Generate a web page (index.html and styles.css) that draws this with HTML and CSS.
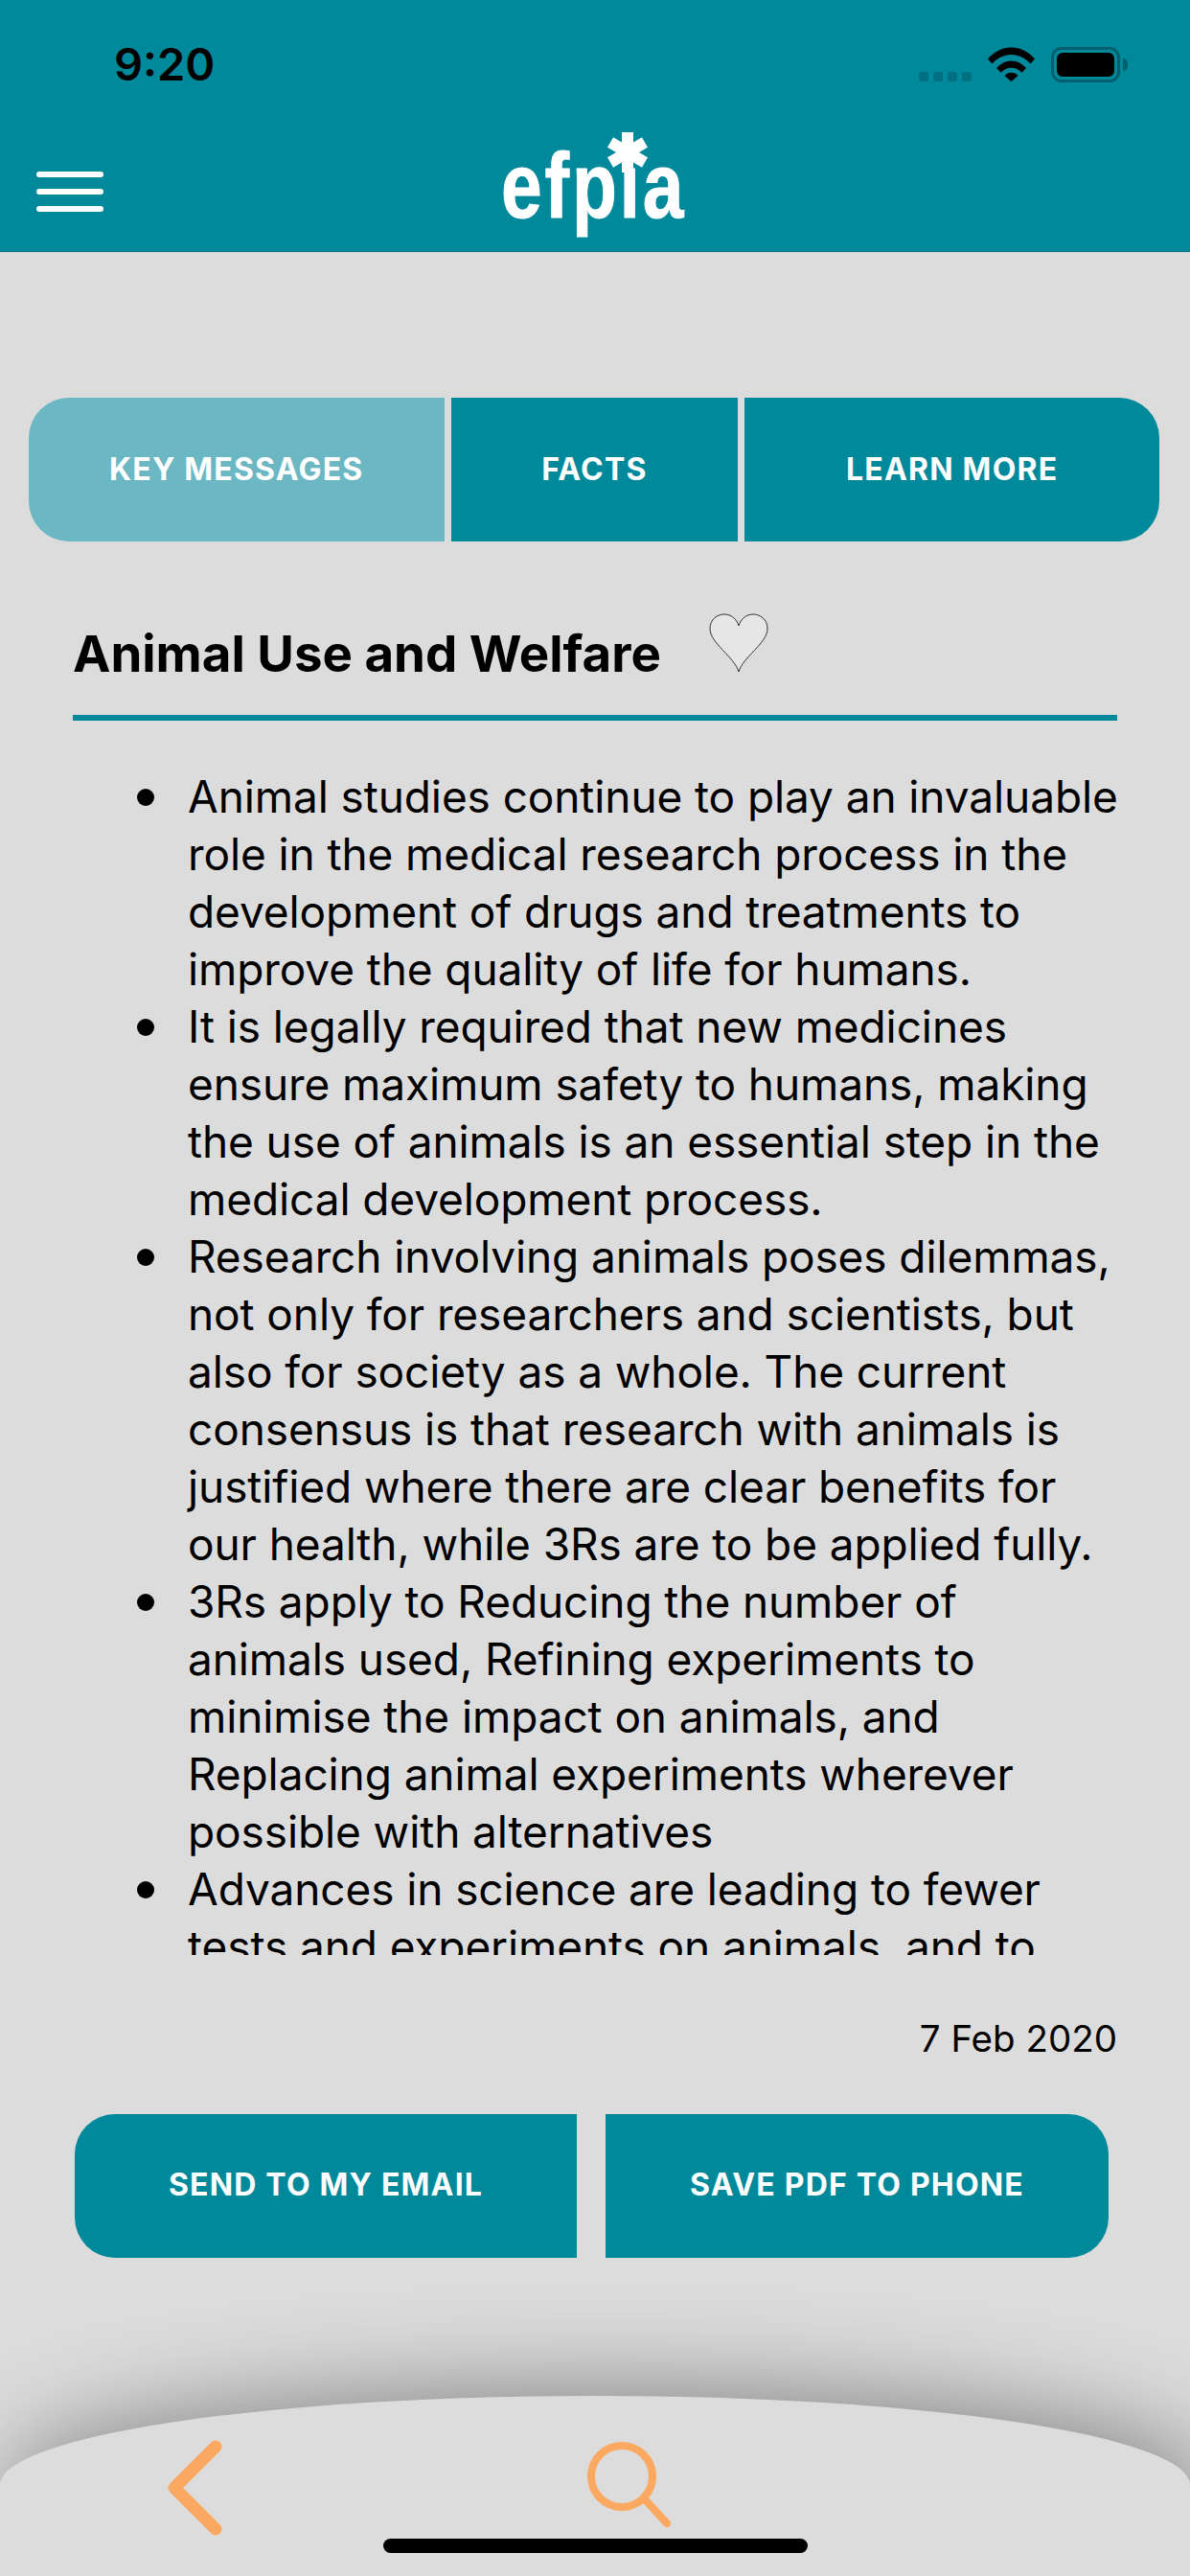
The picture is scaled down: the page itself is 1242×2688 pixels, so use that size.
FILE: index.html
```html
<!DOCTYPE html>
<html lang="en">
	<head>
		<meta charset="UTF-8" />
		<meta name="viewport" content="width=device-width, initial-scale=1.0" />
		<title>Animal Use and Welfare</title>
		<link rel="stylesheet" href="styles.css">
	</head>
	<body>
		<header class="top">
			<div class="status">
				<span class="time">9:20</span>
				<div class="status-icons">
					<div class="signal"><i></i><i></i><i></i><i></i></div>
					<svg class="wifi" width="49" height="36" viewBox="0 0 49 36">
						<path d="M0 12.5C6.500 5 15 0.500 24.500 0.500S42.500 5 49 12.500L44.500 17.500C39 11.500 32 8 24.500 8S10 11.500 4.500 17.500Z" />
						<path d="M9 22C13 17.500 18.500 14.500 24.500 14.500S36 17.500 40 22L35.500 26.800C32.500 23.500 28.700 21.700 24.500 21.700S16.500 23.500 13.500 26.800Z" />
						<path d="M17.500 30C19.500 28 22 26.800 24.500 26.800S29.500 28 31.500 30L24.500 36Z" />
					</svg>
					<div class="battery"><div class="battery-level"></div></div>
					<div class="battery-tip"></div>
				</div>
			</div>
			<div class="nav">
				<div class="menu"><i></i><i></i><i></i></div>
				<div class="logo">
					<span class="logo-text">efpıa</span>
					<svg class="logo-star" width="42" height="42" viewBox="0 0 42 42">
						<path d="M21 0V42M3 10.500L39 31.500M39 10.500L3 31.500" />
					</svg>
				</div>
			</div>
		</header>

		<div class="tabs">
			<a class="tab tab-first tab-active">KEY MESSAGES</a>
			<a class="tab tab-middle">FACTS</a>
			<a class="tab tab-last">LEARN MORE</a>
		</div>

		<main class="content">
			<div class="title-row">
				<h1>Animal Use and Welfare</h1>
				<svg class="heart" width="62" height="62" viewBox="0 0 62 62">
					<path d="M31 61C27 46 1 31 1 16C1 6 9 1 16 1C23 1 29 6 31 13C33 6 39 1 46 1C53 1 61 6 61 16C61 31 35 46 31 61Z" />
				</svg>
			</div>
			<div class="article">
				<ul>
					<li>Animal studies continue to play an invaluable role in the medical research process in the development of drugs and treatments to improve the quality of life for humans.</li>
					<li>It is legally required that new medicines ensure maximum safety to humans, making the use of animals is an essential step in the medical development process.</li>
					<li>Research involving animals poses dilemmas, not only for researchers and scientists, but also for society as a whole. The current consensus is that research with animals is justified where there are clear benefits for our health, while 3Rs are to be applied fully.</li>
					<li>3Rs apply to Reducing the number of animals used, Refining experiments to minimise the impact on animals, and Replacing animal experiments wherever possible with alternatives</li>
					<li>Advances in science are leading to fewer tests and experiments on animals, and to</li>
				</ul>
			</div>
			<p class="date">7 Feb 2020</p>
			<div class="actions">
				<a class="action action-left">SEND TO MY EMAIL</a>
				<a class="action action-right">SAVE PDF TO PHONE</a>
			</div>
		</main>

		<footer class="bottom">
			<div class="bottom-icons">
				<svg class="back" width="58" height="100" viewBox="0 0 58 100">
					<path d="M50 7L7 50L50 93" />
				</svg>
				<svg class="search" width="88" height="90" viewBox="0 0 88 90">
					<circle cx="37" cy="37" r="32" />
					<path d="M60 60L84 86" />
				</svg>
			</div>
			<div class="home-bar"></div>
		</footer>
	</body>
</html>
```

FILE: styles.css
```css
* {
	box-sizing: border-box;
}
html,
body {
	margin: 0;
	height: 2688px;
	overflow: hidden;
}
body {
	display: flex;
	flex-direction: column;
	background-color: #dcdcdc;
	color: #000;
	font-family: Inter, "Liberation Sans", sans-serif;
}

/* header */
.top {
	height: 263px;
	background-color: #00889b;
	border-bottom: 1px solid #0b7686;
}
.status {
	display: flex;
	justify-content: space-between;
	align-items: flex-start;
	height: 130px;
	padding: 44px 65px 0 119px;
}
.time {
	font-size: 47px;
	font-weight: 600;
	line-height: 46px;
}
.status-icons {
	display: flex;
	align-items: flex-start;
	padding-top: 5px;
}
.signal {
	display: flex;
	gap: 5px;
	margin: 26px 17px 0 0;
}
.signal i {
	width: 10px;
	height: 10px;
	border-radius: 3px;
	background-color: #006f80;
}
.wifi {
	fill: #000;
	margin-right: 17px;
}
.battery {
	width: 72px;
	height: 37px;
	padding: 3px;
	border: 3px solid #005f6e;
	border-radius: 11px;
}
.battery-level {
	height: 100%;
	background-color: #000;
	border-radius: 6px;
}
.battery-tip {
	width: 5px;
	height: 13px;
	margin: 12px 0 0 3px;
	background-color: #005f6e;
	border-radius: 0 6px 6px 0;
}
.nav {
	display: flex;
	padding-left: 38px;
}
.menu {
	display: flex;
	flex-direction: column;
	gap: 12px;
	margin-top: 49px;
}
.menu i {
	width: 70px;
	height: 6px;
	background-color: #fff;
	border-radius: 3px;
}
.logo {
	position: relative;
	height: 105px;
	margin: 11px 0 0 415px;
	color: #fff;
	font-family: "Liberation Sans", sans-serif;
	font-size: 96px;
	font-weight: 700;
	letter-spacing: 3.500px;
	line-height: 105px;
	white-space: nowrap;
	-webkit-text-stroke: 1px #fff;
}
.logo-text {
	display: inline-block;
	transform: scaleX(0.8);
	transform-origin: left center;
}
.logo-star {
	position: absolute;
	left: 111px;
	top: -3px;
	fill: none;
	stroke: #fff;
	stroke-width: 12px;
}

/* tabs */
.tabs {
	display: flex;
	gap: 7px;
	margin: 152px 32px 0 30px;
}
.tab {
	display: flex;
	justify-content: center;
	padding-top: 56px;
	height: 150px;
	background-color: #00889b;
	color: #fff;
	font-size: 32px;
	font-weight: 700;
	line-height: 38px;
	letter-spacing: 1.200px;
}
.tab-first {
	width: 434px;
	border-radius: 42px 0 0 42px;
}
.tab-middle {
	width: 300px;
}
.tab-last {
	width: 433px;
	border-radius: 0 42px 42px 0;
}
.tab-active {
	background-color: #6bb7c3;
}

/* article */
.content {
	padding: 0 76px;
}
.title-row {
	display: flex;
	align-items: flex-start;
	height: 187px;
	padding-top: 75px;
	border-bottom: 6px solid #00889b;
}
.title-row h1 {
	margin: 0;
	padding-top: 11px;
	font-size: 52.800px;
	font-weight: 700;
	line-height: 62px;
}
.heart {
	margin-left: 50px;
	fill: #e6e6e6;
	stroke: #333;
	stroke-width: 1px;
}
.article {
	height: 1239px;
	margin: 49px -4px 0 0;
	overflow: hidden;
}
.article ul {
	margin: 0;
	padding-left: 120px;
	list-style: none;
	font-size: 46px;
	letter-spacing: -0.100px;
	line-height: 60px;
}
.article li {
	position: relative;
}
.article li::before {
	content: "";
	position: absolute;
	left: -53px;
	top: 22px;
	width: 18px;
	height: 18px;
	background-color: #000;
	border-radius: 50%;
}
.date {
	margin: 64px 0 0;
	font-size: 38.500px;
	line-height: 46px;
	text-align: right;
}
.actions {
	display: flex;
	gap: 30px;
	margin: 56px 0 0 2px;
}
.action {
	display: flex;
	justify-content: center;
	padding-top: 55px;
	width: 524px;
	height: 150px;
	background-color: #00889b;
	color: #fff;
	font-size: 32px;
	font-weight: 700;
	line-height: 38px;
	letter-spacing: 1.200px;
}
.action-left {
	border-radius: 42px 0 0 42px;
}
.action-right {
	width: 525px;
	border-radius: 0 42px 42px 0;
}

/* bottom bar */
.bottom {
	position: relative;
	height: 188px;
	margin-top: auto;
	padding: 46px 0 0 175px;
	background-color: #dcdcdc;
	border-radius: 621px 621px 0 0 / 93px 93px 0 0;
	box-shadow: 14px -4px 100px rgba(0, 0, 0, 0.42);
}
.bottom-icons {
	display: flex;
	align-items: flex-start;
	gap: 379px;
}
.back {
	fill: none;
	stroke: #fba860;
	stroke-width: 13px;
	stroke-linecap: round;
	stroke-linejoin: round;
}
.search {
	margin-top: 1px;
	fill: none;
	stroke: #fba860;
	stroke-width: 8px;
	stroke-linecap: round;
}
.home-bar {
	position: absolute;
	left: 400px;
	top: 149px;
	width: 443px;
	height: 15px;
	background-color: #000;
	border-radius: 8px;
}
```
